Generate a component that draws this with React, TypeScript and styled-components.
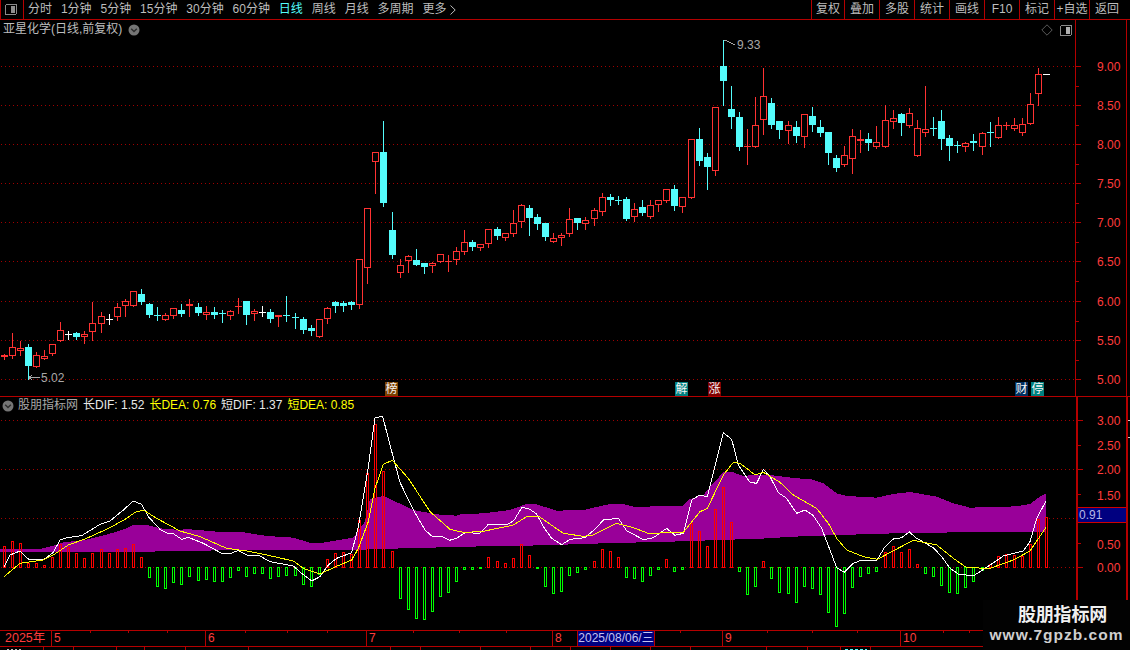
import React from 'react';
import styled, { createGlobalStyle } from 'styled-components';

const FONT = '"Liberation Sans","Noto Sans CJK SC",sans-serif';
const RED_LINE = '#b40000';
const AXIS_RED = '#ff3c3c';
const CANDLE_RED = '#ff3232';
const CYAN = '#54fcfc';

const Global = createGlobalStyle`
  html, body { margin: 0; padding: 0; background: #000; }
  body { font-family: ${FONT}; }
`;

const Page = styled.div`
  position: relative;
  width: 1130px;
  height: 650px;
  overflow: hidden;
  background: #000;
  display: flex;
  flex-direction: column;
`;

const Toolbar = styled.div`
  flex: 0 0 19px;
  display: flex;
  align-items: center;
  border-bottom: 1px solid ${RED_LINE};
  box-sizing: content-box;
  height: 19px;
`;
const ToggleCell = styled.div`
  flex: 0 0 24px;
  height: 19px;
  box-sizing: border-box;
  border-left: 1px solid ${RED_LINE};
  border-right: 1px solid ${RED_LINE};
  display: flex;
  align-items: center;
  padding-left: 4px;
`;
const Nav = styled.nav`
  display: flex;
  align-items: center;
  gap: 8.9px;
  padding-left: 4px;
`;
const NavItem = styled.span<{ $active?: boolean }>`
  font-size: 12px;
  line-height: 19px;
  white-space: nowrap;
  color: ${p => (p.$active ? CYAN : '#bdbdbd')};
  display: inline-flex;
  align-items: center;
  gap: 4px;
`;
const ToolGroup = styled.div`
  margin-left: auto;
  display: flex;
  margin-right: 6px;
`;
const ToolCell = styled.span`
  width: 35px;
  height: 19px;
  box-sizing: border-box;
  border-left: 1px solid ${RED_LINE};
  font-size: 12px;
  line-height: 19px;
  text-align: center;
  white-space: nowrap;
  color: #bdbdbd;
  &:first-child { width: 33px; }
`;

const Panel = styled.section<{ $h: number }>`
  flex: 0 0 ${p => p.$h}px;
  display: flex;
  border-bottom: 1px solid ${RED_LINE};
`;
const Plot = styled.div<{ $w: number }>`
  position: relative;
  flex: 0 0 ${p => p.$w}px;
`;
const AxisColumn = styled.div<{ $edge: number }>`
  position: relative;
  flex: 0 0 auto;
  border-left: ${p => p.$edge}px solid ${RED_LINE};
  border-right: ${p => p.$edge}px solid ${RED_LINE};
`;
const SideStrip = styled.div`
  flex: 1;
`;
const Chart = styled.svg`
  display: block;
  shape-rendering: crispEdges;
  font-family: ${FONT};
`;

const PriceHeader = styled.div`
  position: absolute;
  left: 3px;
  top: 2px;
  display: flex;
  align-items: center;
  gap: 6px;
  font-size: 12px;
  line-height: 15px;
  color: #bdbdbd;
`;
const HeaderTools = styled.div`
  position: absolute;
  right: 3px;
  top: 4px;
  display: flex;
  align-items: center;
  gap: 7px;
`;
const Tag = styled.span<{ $x: number; $bg: string }>`
  position: absolute;
  left: ${p => p.$x}px;
  top: 362px;
  width: 13px;
  height: 14px;
  background: ${p => p.$bg};
  color: #f4f4f4;
  font-size: 12px;
  line-height: 14px;
  text-align: center;
`;

const Legend = styled.div`
  position: absolute;
  left: 2px;
  top: 1px;
  display: flex;
  align-items: center;
  font-size: 12px;
  line-height: 15px;
  white-space: nowrap;
`;
const LegendName = styled.span`
  color: #a8a8a8;
  margin: 0 5px 0 4px;
`;
const LegendValue = styled.span<{ $yellow?: boolean }>`
  color: ${p => (p.$yellow ? '#ffff00' : '#e8e8e8')};
  margin-right: 5px;
`;
const ValueBadge = styled.div`
  position: absolute;
  left: 0;
  top: 110px;
  width: 48px;
  height: 16px;
  box-sizing: border-box;
  background: #000080;
  border-top: 1px solid #d00000;
  border-bottom: 1px solid #d00000;
  font-size: 12px;
  line-height: 14px;
  color: #b8b8e8;
  padding-left: 1px;
`;

const DateBar = styled.div`
  position: relative;
  flex: 0 0 15px;
  border-bottom: 1px solid ${RED_LINE};
  color: ${AXIS_RED};
  font-size: 12px;
  line-height: 15px;
`;
const YearLabel = styled.span`
  position: absolute;
  left: 5px;
  top: 0;
  font-size: 12.5px;
`;
const MonthMark = styled.span<{ $x: number }>`
  position: absolute;
  left: ${p => p.$x}px;
  top: 0;
  height: 15px;
  border-left: 1px solid ${RED_LINE};
  padding-left: 2px;
`;
const DateTick = styled.i<{ $x: number }>`
  position: absolute;
  left: ${p => p.$x}px;
  top: 0;
  width: 1px;
  height: 2px;
  background: ${RED_LINE};
`;
const SelectedDate = styled.span`
  position: absolute;
  left: 577px;
  top: 0;
  width: 78px;
  height: 15px;
  box-sizing: border-box;
  background: #000080;
  border-left: 1px solid ${RED_LINE};
  border-right: 1px solid ${RED_LINE};
  color: #c4c4f0;
  font-size: 12px;
  line-height: 15px;
  text-align: center;
  white-space: nowrap;
`;
const BottomStrip = styled.div`
  flex: 1;
`;

const Watermark = styled.div`
  position: absolute;
  right: 0;
  bottom: 0;
  width: 147px;
  height: 50px;
  background: #020202;
  text-align: center;
  color: #f0f0f0;
  font-weight: 700;
`;
const WatermarkTitle = styled.div`
  font-size: 18px;
  line-height: 20px;
  margin-top: 5px;
  padding-left: 12px;
  letter-spacing: -0.2px;
`;
const WatermarkUrl = styled.div`
  font-size: 15.5px;
  line-height: 20px;
  color: #cfcfcf;
  letter-spacing: 1px;
  white-space: nowrap;
`;

/* ---------- data (read off the picture) ---------- */
type K = [string, number, number, number, number];
const segA: K[] = [
  ['r',226,232,222,236],['r',202,228,159,233],['r',205,212,183,225],['c',202,258,193,296],
  ['r',226,260,215,260],['r',229,236,210,236],['r',193,221,193,225],['r',151,182,126,182],
  ['w',163,163,153,177],['c',160,171,157,177],['r',163,171,153,188],['r',130,157,66,180],
  ['r',109,133,97,156],['w',118,118,102,132],['r',82,110,70,120],['r',64,79,58,108],
  ['r',34,79,34,79],['c',43,66,28,72],['c',72,104,70,112],['c',105,105,82,120],
  ['r',106,121,98,121],['r',85,107,85,115],['c',90,102,72,108],['r',73,79,58,108],
  ['c',81,99,68,104],['r',97,106,78,117],['c',96,106,82,114],['c',100,100,90,125],
  ['r',94,109,90,117],['r',79,82,54,99],['c',63,105,63,132],['r',94,103,88,120],
  ['w',96,96,79,108],['c',96,117,87,126],['r',105,111,105,138],['c',105,105,48,122],
  ['c',111,111,100,144],['c',117,150,111,158],['c',144,152,135,165],['r',118,170,116,170],
  ['r',85,118,82,129],['c',67,77,64,96],['c',70,77,64,92],['c',67,74,64,86],
];
const segB: K[] = [
  ['r',478,615,478,624],['r',325,503,325,549],['r',157,185,157,279],['c',156,309,63,318],
  ['c',390,465,336,474],['r',495,519,477,531],['r',469,483,466,516],['c',480,495,447,495],
  ['c',489,501,489,519],['r',490,497,487,516],['r',463,485,463,485],['r',482,482,465,513],
  ['r',454,479,441,492],['r',427,455,390,462],['c',426,441,420,450],['r',431,443,431,450],
  ['r',388,431,388,441],['c',387,408,381,417],['r',400,413,400,420],['r',370,401,330,408],
  ['r',316,365,312,381],['c',324,354,316,405],['c',351,372,342,387],['c',369,411,369,420],
  ['r',415,425,399,425],['r',405,413,399,435],['r',358,401,324,408],['c',354,369,354,387],
  ['r',361,371,351,387],['r',331,356,325,375],['r',292,335,279,345],['c',291,300,282,315],
  ['c',299,299,288,312],['c',297,357,291,360],['r',328,351,309,363],['c',321,339,300,345],
  ['r',316,350,300,354],['r',301,315,301,333],['r',268,302,268,306],['c',267,318,255,330],
  ['r',292,320,292,336],
];
const segC: K[] = [
  ['r',328,503,328,503],['c',327,393,294,405],['c',381,411,369,477],['r',232,422,232,435],
  ['c',108,153,30,225],['c',237,261,168,294],['c',261,351,246,360],['r',349,349,297,402],
  ['r',286,350,201,350],['r',199,269,114,312],['c',219,285,204,294],['c',273,300,273,324],
  ['r',286,302,273,339],['c',291,318,273,336],['r',253,320,253,351],['c',258,285,231,303],
  ['c',291,309,270,318],['c',306,369,306,402],['c',384,414,375,423],['r',376,404,348,408],
  ['r',319,386,297,429],['r',328,332,300,366],['c',327,339,309,360],['r',337,350,288,354],
  ['r',271,350,226,350],['r',265,275,240,294],['c',252,279,249,315],['r',250,287,234,291],
  ['r',295,377,270,377],['r',298,308,168,318],['c',295,295,261,315],['c',273,327,240,357],
  ['c',324,348,315,390],['c',345,345,333,366],['r',340,350,336,363],['c',333,339,312,360],
  ['r',310,350,306,372],['c',307,307,276,348],['r',286,323,261,323],['r',285,285,276,297],
  ['r',286,296,264,300],['r',283,308,264,315],['r',223,281,189,281],['r',133,193,114,225],
];
const candles = [
  ...segA.map(k => ({ k, y0: 280 })),
  ...segB.map(k => ({ k, y0: 100 })),
  ...segC.map(k => ({ k, y0: 30 })),
];

const jumps = [12, 24, 36, 48, 61, 73, 85, 97, 109, 121];
const X = (i: number) => 4 + 8 * i + jumps.filter(j => i >= j).length;

const PRICE_GRID = [66, 105, 144, 183, 222, 261, 301, 340, 379];
const PRICE_LABELS = ['9.00', '8.50', '8.00', '7.50', '7.00', '6.50', '6.00', '5.50', '5.00'];

const hist: number[] = [
  454,439,445,505,505,511,487,448,457,475,490,475,463,475,463,460,448,487,
  547,574,580,562,568,544,556,553,559,559,547,526,544,535,535,550,544,541,541,568,574,538,
  493,475,472,478,376,235,88,229,469,
  610,643,670,673,649,604,592,559,523,523,520,
  487,499,505,490,448,481,520,574,595,589,541,532,523,
  499,463,469,487,547,550,559,541,523,493,529,523,
  385,409,454,343,275,382,529,598,574,499,550,592,595,622,574,580,598,652,694,655,577,544,535,529,
  472,454,472,463,508,535,544,571,592,595,577,559,525,508,484,478,481,484,448,373,367,
];
const BASE_Z = 517;

type P = [number, number];
const z = (pts: P[], x0: number, y0 = 395) => pts.map(([x, y]) => `${x0 + x / 3},${y0 + y / 3}`).join(' ');

const white =
  z([[12,515],[30,480],[60,468],[85,492],[130,495],[160,472],[180,435],[200,428],[245,422],[300,388],[330,378],[370,345],[400,318],[425,328],[445,365],[480,403],[500,414],[520,416],[545,433],[565,427],[610,445],[665,475],[690,476],[715,466],[740,480],[780,483],[810,500],[880,513],[905,535],[935,558],[960,545],[985,510],[1010,490],[1055,473],[1075,395],[1105,215]], 0) + ' ' +
  z([[15,68],[38,64],[60,150],[90,262],[130,345],[165,405],[185,423],[215,424],[238,436],[260,430],[285,413],[330,415],[355,388],[410,390],[432,376],[455,338],[475,340],[500,357],[520,395],[545,430],[575,449],[600,433],[645,428],[680,398],[700,375],[745,370],[770,407],[820,434],[850,428],[890,400],[915,421],[940,415],[965,315],[990,300],[1012,305],[1060,113],[1085,133],[1105,210]], 370) + ' ' +
  z([[0,262],[20,265],[40,223],[60,245],[85,293],[110,310],[140,355],[165,345],[190,362],[215,400],[240,465],[260,518],[283,532],[310,505],[330,497],[380,497],[405,455],[430,432],[455,428],[478,411],[500,430],[550,458],[575,485],[600,520],[625,537],[670,543],[720,510],[760,483],[820,468],[840,440],[860,370],[888,318]], 750);

const yellow =
  z([[12,545],[60,505],[130,495],[160,480],[205,450],[260,430],[330,398],[380,370],[405,352],[430,345],[470,370],[540,408],[600,425],[680,460],[740,468],[800,480],[880,498],[910,520],[960,537],[1005,516],[1055,495],[1075,460],[1105,380]], 0) + ' ' +
  z([[0,355],[15,280],[40,208],[67,196],[115,250],[180,350],[240,403],[280,412],[335,410],[430,390],[470,365],[505,363],[580,415],[640,424],[670,420],[740,385],[790,398],[840,417],[890,412],[940,412],[990,350],[1012,340],[1060,240],[1090,202],[1110,205]], 370) + ' ' +
  z([[0,228],[15,240],[40,232],[90,262],[130,300],[200,340],[235,385],[260,430],[290,465],[340,485],[382,493],[440,462],[490,436],[560,450],[610,490],[650,518],[720,520],[790,495],[840,468],[888,397]], 750);

const purple =
  z([[0,462],[120,462],[150,455],[190,442],[260,434],[330,416],[380,400],[400,390],[440,390],[480,400],[540,405],[560,402],[650,410],[720,410],[800,423],[880,428],[930,443],[970,443],[1060,428],[1095,380]], 0) + ' ' +
  z([[0,312],[40,303],[60,312],[130,345],[200,358],[260,362],[270,358],[340,355],[420,345],[470,327],[500,328],[560,347],[640,345],[720,327],[760,327],[800,337],[880,332],[940,332],[960,312],[1000,300],[1020,275],[1060,232],[1090,232],[1125,245]], 370) + ' ' +
  z([[0,240],[60,240],[140,250],[180,252],[220,265],[260,295],[290,303],[380,308],[430,297],[480,291],[560,305],[610,325],[660,338],[800,334],[840,327],[870,305],[888,295],[888,411],[500,413],[270,420],[130,425],[0,433]], 750) + ' ' +
  z([[1140,432],[900,440],[700,445],[520,451],[340,454],[220,457],[100,460],[0,463]], 370) + ' ' +
  z([[1090,464],[660,466],[440,470],[400,472],[0,472]], 0);

const DATE_TICKS = [90, 128, 167, 245, 287, 327, 413, 459, 506, 680, 767, 812, 857, 943, 969];
const STRIP_TICKS = [43, 73, 116, 144, 185, 248, 390, 420, 480, 530, 570, 610, 650, 690, 766, 807, 840, 870];

/* ---------- small drawings ---------- */
const Chevron = () => (
  <svg width="12" height="12" viewBox="0 0 12 12">
    <circle cx="6" cy="6" r="5.5" fill="#757575" />
    <path d="M3.2 4.8 L6 7.6 L8.8 4.8" fill="none" stroke="#2c2c2c" strokeWidth="1.4" />
  </svg>
);
const PanelToggle = ({ light }: { light?: boolean }) => (
  <svg width="12" height="11" viewBox="0 0 12 11" shapeRendering="crispEdges">
    <rect x="0.5" y="0.5" width="11" height="10" rx="1.5" fill="#000" stroke="#8a8a8a" />
    <rect x="6" y="2" width="4" height="7" fill={light ? '#b0b0b0' : '#8f8f8f'} />
  </svg>
);
const Diamond = () => (
  <svg width="12" height="12" viewBox="0 0 12 12">
    <path d="M6 .8 L11.2 6 L6 11.2 L.8 6 Z" fill="none" stroke="#5a5a5a" />
  </svg>
);
const MoreArrow = () => (
  <svg width="6" height="10" viewBox="0 0 6 10">
    <path d="M.5 .5 L5.2 5 L.5 9.5" fill="none" stroke="#bdbdbd" />
  </svg>
);

const Candle = ({ i, k, y0 }: { i: number; k: K; y0: number }) => {
  const [kind, t, b, hi, lo] = k;
  const x = X(i);
  const color = kind === 'r' ? CANDLE_RED : kind === 'c' ? CYAN : '#ffffff';
  const top = Math.round(y0 + t / 3);
  const bot = Math.round(y0 + b / 3);
  const high = Math.round(y0 + hi / 3);
  const low = Math.round(y0 + lo / 3);
  const solid = kind !== 'r' || bot - top <= 2;
  return (
    <g>
      <rect x={x} y={high} width={1} height={Math.max(1, low - high + 1)} fill={color} />
      {solid ? (
        <rect x={x - 3} y={top} width={7} height={Math.max(1, bot - top)} fill={color} />
      ) : (
        <rect x={x - 2.5} y={top + 0.5} width={6} height={bot - top - 1} fill="#000" stroke={color} />
      )}
    </g>
  );
};

const HistBar = ({ i, v }: { i: number; v: number }) => {
  const base = Math.round(395 + BASE_Z / 3);
  const y = Math.round(395 + v / 3);
  const x = X(i);
  const up = y < base;
  const color = up ? '#ff0000' : '#00ff00';
  const a = Math.min(y, base);
  const h = Math.abs(base - y);
  if (h <= 1) return <rect x={x - 1} y={a} width={3} height={2} fill={color} />;
  return <rect x={x - 0.5} y={a + 0.5} width={2} height={h} fill="none" stroke={color} />;
};

const App = () => (
  <Page>
    <Global />
    <Toolbar>
      <ToggleCell><PanelToggle /></ToggleCell>
      <Nav>
        {['分时', '1分钟', '5分钟', '15分钟', '30分钟', '60分钟'].map(t => <NavItem key={t}>{t}</NavItem>)}
        <NavItem $active>日线</NavItem>
        {['周线', '月线', '多周期'].map(t => <NavItem key={t}>{t}</NavItem>)}
        <NavItem>更多<MoreArrow /></NavItem>
      </Nav>
      <ToolGroup>
        {['复权', '叠加', '多股', '统计', '画线', 'F10', '标记', '+自选', '返回'].map(t => <ToolCell key={t}>{t}</ToolCell>)}
      </ToolGroup>
    </Toolbar>

    <Panel $h={376}>
      <Plot $w={1075}>
        <Chart width={1075} height={376} viewBox="0 20 1075 376">
          {PRICE_GRID.map(y => (
            <line key={y} x1={1} x2={1075} y1={y + 0.5} y2={y + 0.5} stroke="#a00000" strokeDasharray="1 3" />
          ))}
          {candles.map((c, i) => <Candle key={i} i={i} k={c.k} y0={c.y0} />)}
          <rect x={X(129) - 3} y={74} width={7} height={1} fill="#ffffff" />
          <g fill="none" stroke="#a8a8a8">
            <path d="M29 377.5 H40 M29 377.5 L32 375 M29 377.5 L32 380" />
            <path d="M723.5 40.5 H726 L735 45" />
          </g>
          <g fill="#a8a8a8" fontSize={12}>
            <text x={41} y={382}>5.02</text>
            <text x={737} y={49}>9.33</text>
          </g>
        </Chart>
        <PriceHeader>亚星化学(日线,前复权)<Chevron /></PriceHeader>
        <HeaderTools><Diamond /><PanelToggle light /></HeaderTools>
        <Tag $x={385} $bg="#7a4000">榜</Tag>
        <Tag $x={675} $bg="#008080">解</Tag>
        <Tag $x={708} $bg="#800000">涨</Tag>
        <Tag $x={1015} $bg="#003060">财</Tag>
        <Tag $x={1031} $bg="#008080">停</Tag>
      </Plot>
      <AxisColumn $edge={1}>
        <Chart width={50} height={376} viewBox="1076 20 50 376">
          {PRICE_GRID.map((y, i) => (
            <g key={y}>
              <rect x={1076} y={y} width={5} height={1} fill={RED_LINE} />
              {i < 8 && <rect x={1076} y={Math.round((y + PRICE_GRID[i + 1]) / 2)} width={3} height={1} fill={RED_LINE} />}
              <text x={1097} y={y + 5} fill={AXIS_RED} fontSize={12}>{PRICE_LABELS[i]}</text>
            </g>
          ))}
        </Chart>
      </AxisColumn>
      <SideStrip />
    </Panel>

    <Panel $h={233}>
      <Plot $w={1076}>
        <Chart width={1076} height={233} viewBox="0 397 1076 233">
          {[420, 469, 518, 567].map(y => (
            <line key={y} x1={1} x2={1076} y1={y + 0.5} y2={y + 0.5} stroke="#a00000" strokeDasharray="1 3" />
          ))}
          <polygon points={purple} fill="#990099" />
          {hist.map((v, i) => <HistBar key={i} i={i} v={v} />)}
          <polyline points={white} fill="none" stroke="#ffffff" />
          <polyline points={yellow} fill="none" stroke="#ffff00" />
        </Chart>
        <Legend>
          <Chevron />
          <LegendName>股朋指标网</LegendName>
          <LegendValue>长DIF: 1.52</LegendValue>
          <LegendValue $yellow>长DEA: 0.76</LegendValue>
          <LegendValue>短DIF: 1.37</LegendValue>
          <LegendValue $yellow>短DEA: 0.85</LegendValue>
        </Legend>
      </Plot>
      <AxisColumn $edge={2}>
        <Chart width={48} height={233} viewBox="1078 397 48 233">
          {[[420, '3.00'], [469, '2.00'], [567, '0.00']].map(([y, t]) => (
            <g key={t as string}>
              <rect x={1078} y={y as number} width={5} height={1} fill={RED_LINE} />
              <text x={1097} y={(y as number) + 5} fill={AXIS_RED} fontSize={12}>{t}</text>
            </g>
          ))}
          <rect x={1078} y={518} width={5} height={1} fill={RED_LINE} />
          {[[445, '2.50', 446], [494, '1.50', 496], [543, '0.50', 545]].map(([y, t, ly]) => (
            <g key={t as string}>
              <rect x={1078} y={y as number} width={3} height={1} fill={RED_LINE} />
              <text x={1097} y={(ly as number) + 4} fill={AXIS_RED} fontSize={12}>{t}</text>
            </g>
          ))}
        </Chart>
        <ValueBadge>0.91</ValueBadge>
      </AxisColumn>
      <SideStrip>
        <Chart width={2} height={233} viewBox="0 397 2 233">
          <rect x={0} y={420} width={2} height={1} fill="#cfcfcf" />
          <rect x={0} y={437} width={2} height={1} fill="#cfcfcf" />
        </Chart>
      </SideStrip>
    </Panel>

    <DateBar>
      <YearLabel>2025年</YearLabel>
      <MonthMark $x={51}>5</MonthMark>
      <MonthMark $x={205}>6</MonthMark>
      <MonthMark $x={366}>7</MonthMark>
      <MonthMark $x={552}>8</MonthMark>
      <SelectedDate>2025/08/06/三</SelectedDate>
      <MonthMark $x={722}>9</MonthMark>
      <MonthMark $x={900}>10</MonthMark>
      {DATE_TICKS.map(x => <DateTick key={x} $x={x} />)}
    </DateBar>

    <BottomStrip>
      <Chart width={1130} height={4} viewBox="0 0 1130 4">
        {STRIP_TICKS.map(x => <rect key={x} x={x} y={0} width={1} height={4} fill={RED_LINE} />)}
        <line x1={7} x2={22} y1={2.5} y2={2.5} stroke="#bdbdbd" strokeDasharray="2 2" />
        <line x1={845} x2={867} y1={2.5} y2={2.5} stroke={CYAN} strokeDasharray="3 2" />
      </Chart>
    </BottomStrip>

    <Watermark>
      <WatermarkTitle>股朋指标网</WatermarkTitle>
      <WatermarkUrl>www.7gpzb.com</WatermarkUrl>
    </Watermark>
  </Page>
);

export default App;
